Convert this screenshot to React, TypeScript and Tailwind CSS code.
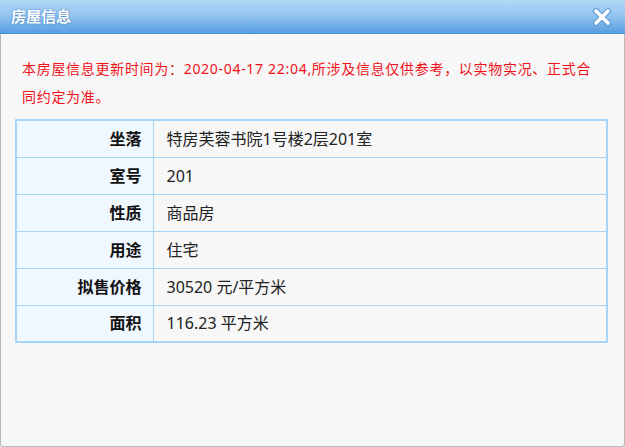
const rows = [
  { label: "坐落", value: "特房芙蓉书院1号楼2层201室" },
  { label: "室号", value: "201" },
  { label: "性质", value: "商品房" },
  { label: "用途", value: "住宅" },
  { label: "拟售价格", value: "30520 元/平方米" },
  { label: "面积", value: "116.23 平方米" },
];

function CloseIcon() {
  return (
    <svg width="22" height="22" viewBox="0 0 22 22">
      <path
        d="M5 5 L17 17 M17 5 L5 17"
        stroke="#5f9ed8"
        strokeWidth="6"
        strokeLinecap="round"
        fill="none"
      />
      <path
        d="M5 5 L17 17 M17 5 L5 17"
        stroke="#ffffff"
        strokeWidth="3.6"
        strokeLinecap="round"
        fill="none"
      />
    </svg>
  );
}

export default function App() {
  return (
    <div
      className="flex h-[447px] w-[625px] flex-col overflow-hidden bg-[#f7f7f7]"
      style={{ fontFamily: '"Noto Sans", "Noto Sans CJK SC", sans-serif' }}
    >
      <div className="flex h-[34px] items-center justify-between border-b border-[#4a8fd6] bg-gradient-to-b from-[#b3d8f6] via-[#90c3ef] to-[#5a9de1] pl-[11px] pr-[12px]">
        <span className="text-[15px] font-bold leading-none text-white [text-shadow:0_0_2px_#2f6fb8]">
          房屋信息
        </span>
        <CloseIcon />
      </div>

      <div className="flex flex-1 flex-col rounded-b-[3px] border-x border-b border-[#b8b8b8] px-[14px] pt-[21px]">
        <p className="w-[590px] px-[7px] text-[14px] leading-[28px] tracking-[0.7px] text-[#f2111a]">
          本房屋信息更新时间为：2020-04-17 22:04,所涉及信息仅供参考，以实物实况、正式合同约定为准。
        </p>

        <table className="mt-[8px] w-[593px] border-collapse border-2 border-[#a6d5f8]">
          <tbody>
            {rows.map((r) => (
              <tr key={r.label} className="h-[37px]">
                <td className="w-[137px] border border-[#a6d5f8] bg-[#eff7ff] pr-[11px] text-right text-[16px] font-bold text-[#111]">
                  {r.label}
                </td>
                <td className="border border-[#a6d5f8] pl-[13px] text-[16px] text-[#222]">
                  {r.value}
                </td>
              </tr>
            ))}
          </tbody>
        </table>
      </div>
    </div>
  );
}
